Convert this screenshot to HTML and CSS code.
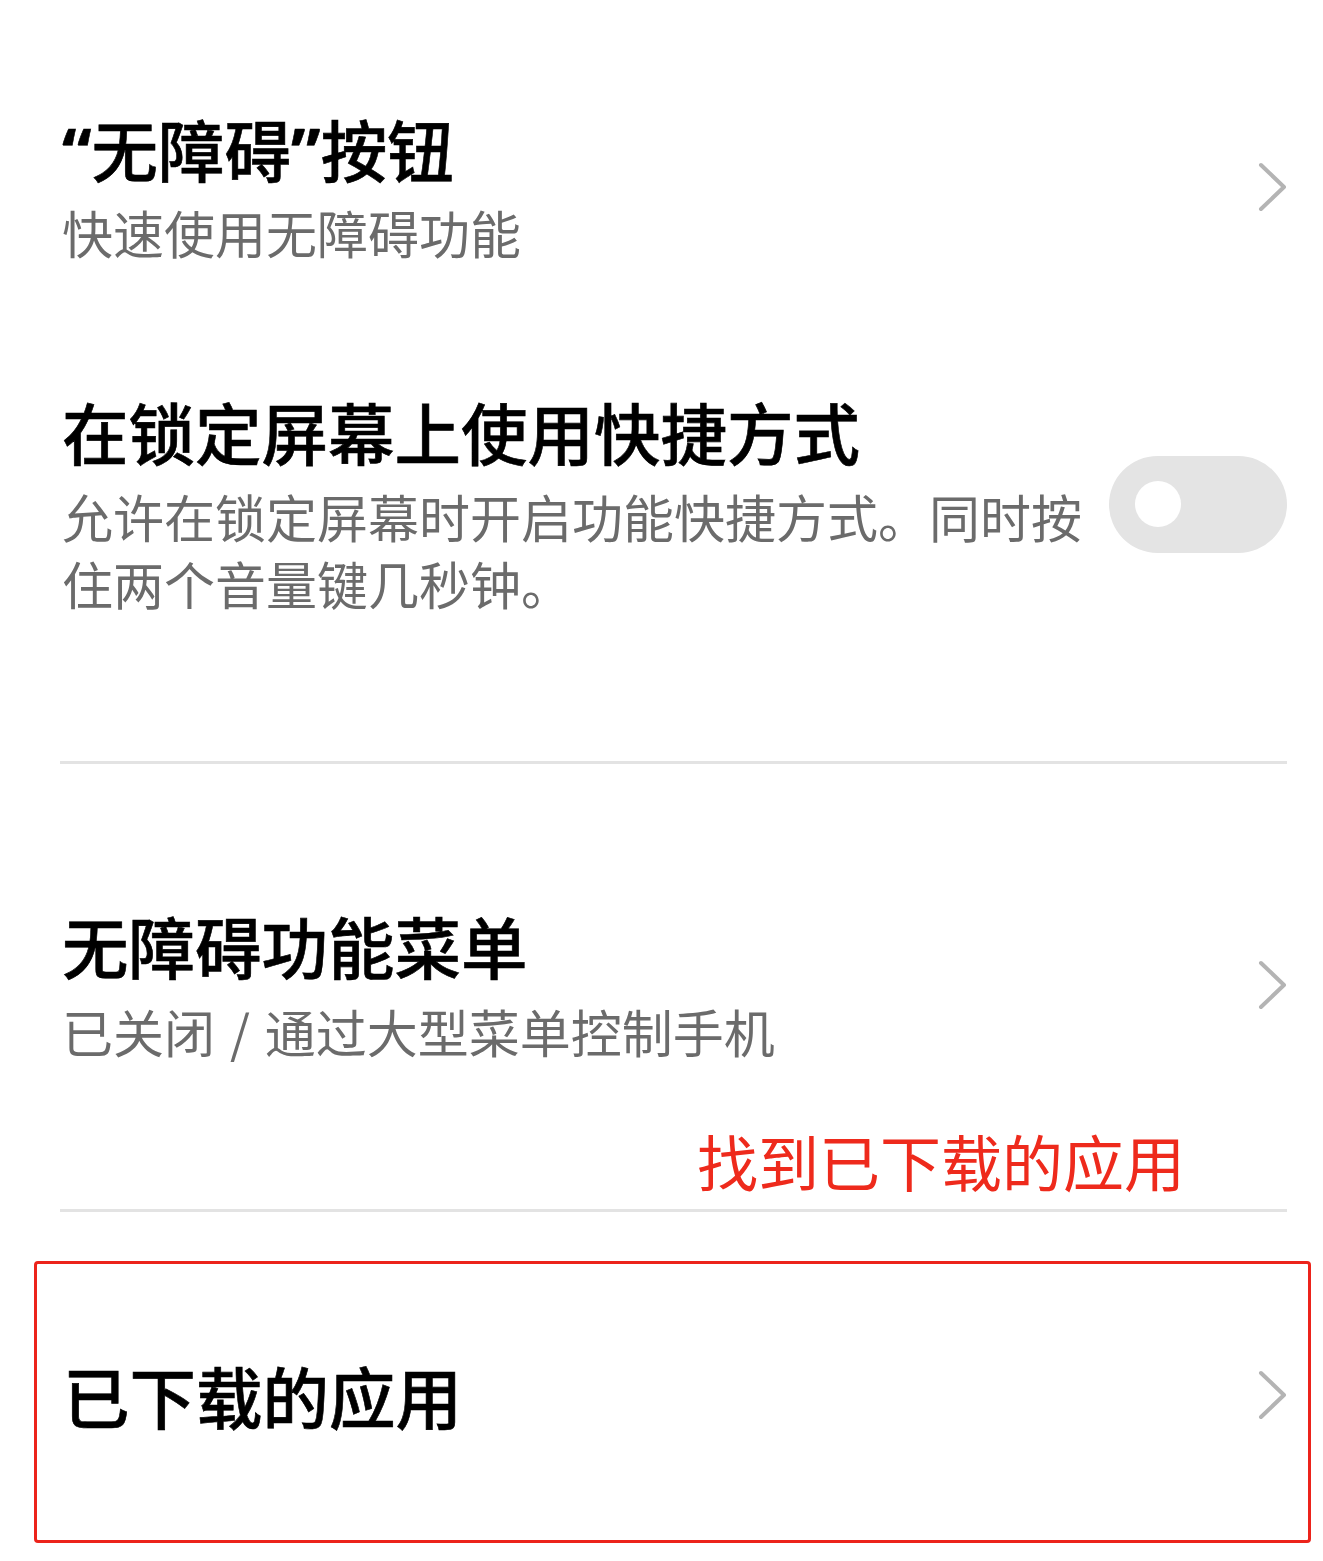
FILE: index.html
```html
<!DOCTYPE html>
<html lang="zh-CN">
<head>
<meta charset="utf-8">
<title>无障碍</title>
<link rel="stylesheet" href="styles.css">
</head>
<body>
<div class="page">
  <div class="row item1">
    <div class="text">
      <div class="title"><span class="q">“</span>无障碍<span class="q">”</span>按钮</div>
      <div class="sub">快速使用无障碍功能</div>
    </div>
    <svg class="chev" viewBox="0 0 30 50" width="30" height="50"><polyline points="4,3 27,25 4,47"/></svg>
  </div>

  <div class="row item2">
    <div class="text">
      <div class="title">在锁定屏幕上使用快捷方式</div>
      <div class="sub">允许在锁定屏幕时开启功能快捷方式。同时按住两个音量键几秒钟。</div>
    </div>
    <div class="toggle"><div class="knob"></div></div>
  </div>

  <div class="divider div1"></div>

  <div class="row item3">
    <div class="text">
      <div class="title">无障碍功能菜单</div>
      <div class="sub">已关闭<span class="sp"> / </span>通过大型菜单控制手机</div>
    </div>
    <svg class="chev" viewBox="0 0 30 50" width="30" height="50"><polyline points="4,3 27,25 4,47"/></svg>
  </div>

  <div class="note">找到已下载的应用</div>

  <div class="divider div2"></div>

  <div class="highlight">
    <div class="row item4">
      <div class="text">
        <div class="title">已下载的应用</div>
      </div>
      <svg class="chev" viewBox="0 0 30 50" width="30" height="50"><polyline points="4,3 27,25 4,47"/></svg>
    </div>
  </div>
</div>
</body>
</html>
```

FILE: styles.css
```css
html, body {
  margin: 0;
  padding: 0;
  background: #ffffff;
}

body {
  font-family: "Noto Sans CJK SC", "Noto Sans", sans-serif;
  color: #000;
}

.page {
  width: 1323px;
  height: 1561px;
  overflow: hidden;
  display: flex;
  flex-direction: column;
}

.row {
  display: flex;
  align-items: center;
  padding-left: 62px;
  padding-right: 36px;
}

.text {
  flex: 1;
  min-width: 0;
}

.title {
  font-size: 66.5px;
  line-height: 80px;
  font-weight: 500;
  color: #000;
  white-space: nowrap;
  -webkit-text-stroke: 0.6px #000;
}

.q {
  font-family: "Noto Sans", sans-serif;
  font-weight: 700;
  line-height: 1;
}

.sp {
  word-spacing: 3.5px;
}

.sub {
  font-size: 51px;
  line-height: 67px;
  color: #6b6b6b;
  margin-top: 11px;
}

.chev {
  flex: none;
  display: block;
}

.chev polyline {
  fill: none;
  stroke: #b4b4b4;
  stroke-width: 4;
  stroke-linecap: round;
  stroke-linejoin: round;
}

.item1 {
  padding-top: 108px;
}

.item2 {
  margin-top: 125px;
}

.item2 .sub {
  margin-top: 12px;
}

.toggle {
  flex: none;
  width: 178px;
  height: 97px;
  border-radius: 49px;
  background: #e4e4e4;
  display: flex;
  align-items: center;
  padding-left: 26px;
  box-sizing: border-box;
}

.knob {
  width: 46px;
  height: 46px;
  border-radius: 50%;
  background: #ffffff;
}

.divider {
  height: 3px;
  background: #e3e3e3;
  margin-left: 60px;
  margin-right: 36px;
}

.div1 {
  margin-top: 144px;
}

.item3 {
  margin-top: 141px;
}

.item3 .sub {
  margin-top: 13px;
}

.note {
  margin-top: 61px;
  padding-left: 697px;
  font-size: 61px;
  line-height: 70px;
  color: #ee2a1c;
  white-space: nowrap;
}

.div2 {
  margin-top: 13px;
}

.highlight {
  margin-top: 49px;
  margin-left: 34px;
  width: 1277px;
  height: 282px;
  box-sizing: border-box;
  border: 3px solid #ec231b;
  border-radius: 4px;
}

.item4 {
  padding-top: 91px;
  padding-left: 26px;
  padding-right: 21px;
}
```
